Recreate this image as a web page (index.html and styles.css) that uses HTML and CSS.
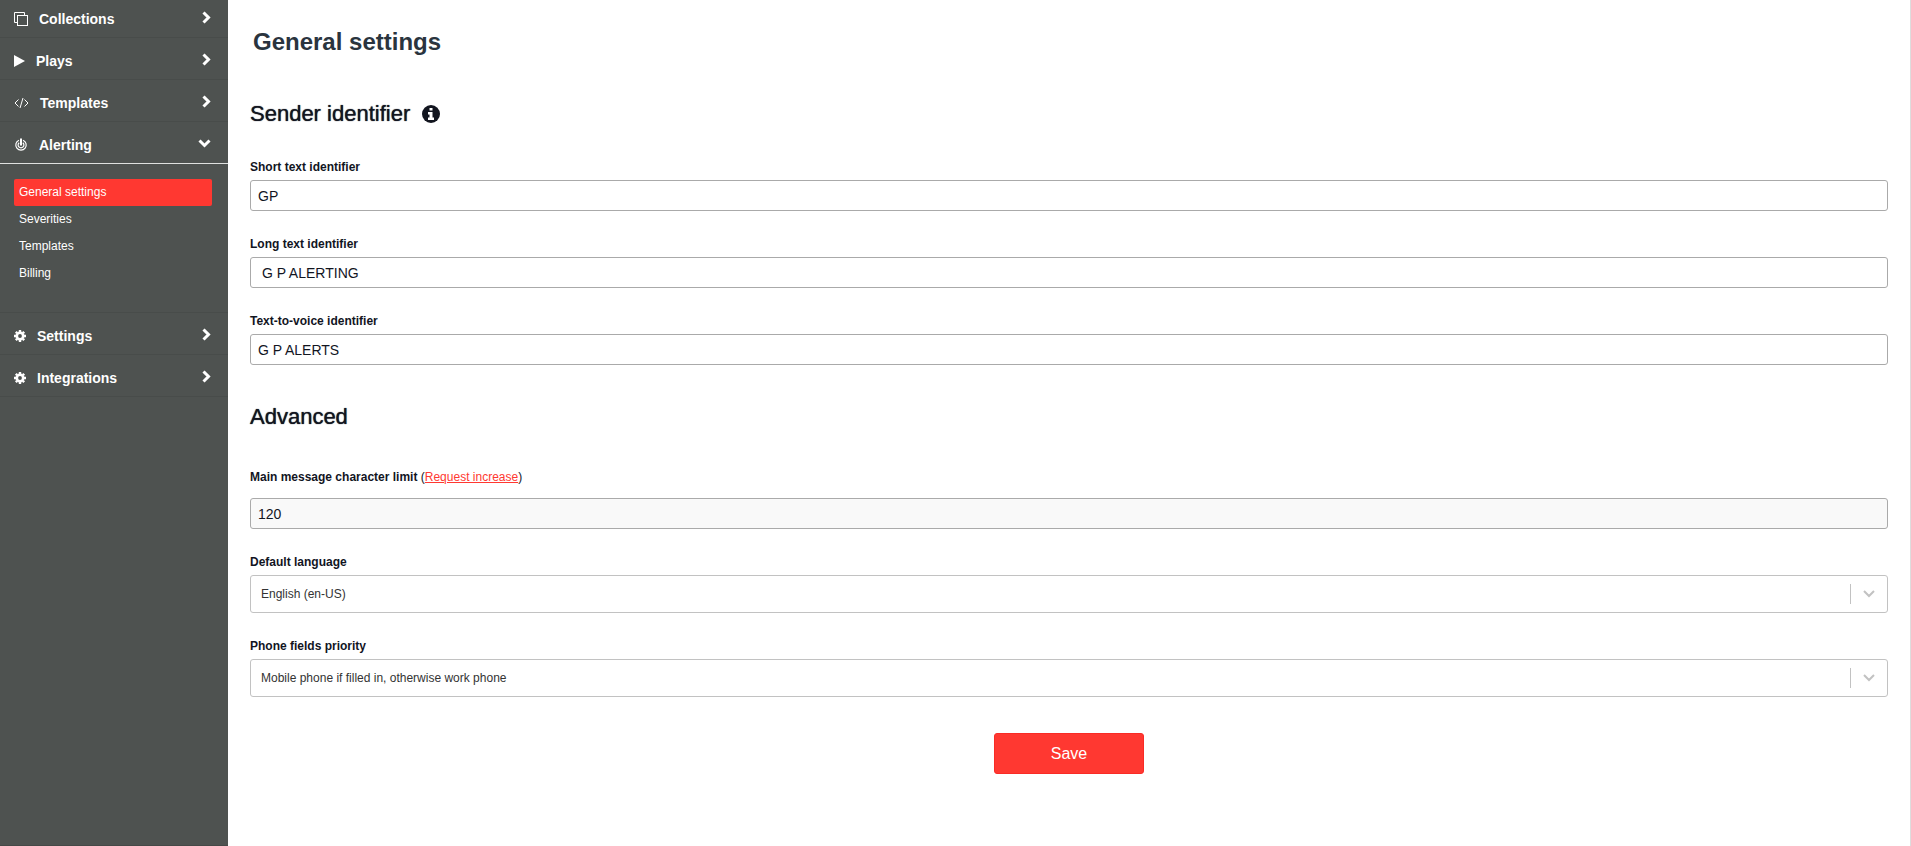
FILE: index.html
```html
<!DOCTYPE html>
<html lang="en">
<head>
    <meta charset="UTF-8">
    <meta name="viewport" content="width=device-width, initial-scale=1.0">
    <title>General settings</title>
    <link rel="stylesheet" href="styles.css">
</head>
<body>

<nav class="sidebar">
    <a class="menu-item" href="#">
        <svg width="14" height="14" viewBox="0 0 14 14" fill="none" stroke="currentColor"><path d="M3 10.500H.5V.5h10V3"/><rect x="3.500" y="3.500" width="10" height="10"/></svg>
        <span>Collections</span>
        <svg class="arrow" width="9" height="13" viewBox="0 0 9 13"><path d="M1.500 1.500l5 5-5 5"/></svg>
    </a>
    <a class="menu-item" href="#">
        <svg width="11" height="12" viewBox="0 0 11 12" fill="currentColor"><path d="M0 0l11 6-11 6z"/></svg>
        <span>Plays</span>
        <svg class="arrow" width="9" height="13" viewBox="0 0 9 13"><path d="M1.500 1.500l5 5-5 5"/></svg>
    </a>
    <a class="menu-item" href="#">
        <svg width="15" height="12" viewBox="0 0 15 12" fill="none" stroke="currentColor"><path d="M4.500 2.500L1 6l3.500 3.500M10.500 2.500L14 6l-3.500 3.500M9 1L6 11"/></svg>
        <span>Templates</span>
        <svg class="arrow" width="9" height="13" viewBox="0 0 9 13"><path d="M1.500 1.500l5 5-5 5"/></svg>
    </a>
    <a class="menu-item open" href="#">
        <svg width="14" height="14" viewBox="0 0 14 14" fill="none" stroke="currentColor"><path d="M5 2.200a5.200 5.200 0 1 0 4 0M5.200 4.700a2.900 2.900 0 1 0 3.600 0" stroke-width="1.200"/><path d="M7 .5v7" stroke-width="2"/></svg>
        <span>Alerting</span>
        <svg class="arrow" width="13" height="9" viewBox="0 0 13 9"><path d="M1.500 1.500l5 5 5-5"/></svg>
    </a>
    <div class="submenu">
        <a class="active" href="#">General settings</a>
        <a href="#">Severities</a>
        <a href="#">Templates</a>
        <a href="#">Billing</a>
    </div>
    <a class="menu-item" href="#">
        <svg width="12" height="12" viewBox="0 0 12 12" fill="none" stroke="currentColor"><circle cx="6" cy="6" r="3.200" stroke-width="2.600"/><path d="M6 0v2M6 10v2M0 6h2M10 6h2M1.800 1.800l1.400 1.400M8.800 8.800l1.400 1.400M1.800 10.200l1.400-1.400M8.800 3.200l1.400-1.400" stroke-width="2.400"/></svg>
        <span>Settings</span>
        <svg class="arrow" width="9" height="13" viewBox="0 0 9 13"><path d="M1.500 1.500l5 5-5 5"/></svg>
    </a>
    <a class="menu-item" href="#">
        <svg width="12" height="12" viewBox="0 0 12 12" fill="none" stroke="currentColor"><circle cx="6" cy="6" r="3.200" stroke-width="2.600"/><path d="M6 0v2M6 10v2M0 6h2M10 6h2M1.800 1.800l1.400 1.400M8.800 8.800l1.400 1.400M1.800 10.200l1.400-1.400M8.800 3.200l1.400-1.400" stroke-width="2.400"/></svg>
        <span>Integrations</span>
        <svg class="arrow" width="9" height="13" viewBox="0 0 9 13"><path d="M1.500 1.500l5 5-5 5"/></svg>
    </a>
</nav>

<main class="content">
    <h1>General settings</h1>
    <form>
        <h2>Sender identifier
            <svg width="18" height="18" viewBox="0 0 18 18"><circle cx="9" cy="9" r="9" fill="currentColor"/><path d="M7.500 3h3v2.600h-3zM6 7h4.500v5.500H12V15H6v-2.500h1.500v-3H6z" fill="#fff"/></svg>
        </h2>
        <div class="field">
            <label for="shortId">Short text identifier</label>
            <input type="text" id="shortId" value="GP">
        </div>
        <div class="field">
            <label for="longId">Long text identifier</label>
            <input type="text" id="longId" value=" G P ALERTING">
        </div>
        <div class="field">
            <label for="voiceId">Text-to-voice identifier</label>
            <input type="text" id="voiceId" value="G P ALERTS">
        </div>

        <h2 class="advanced">Advanced</h2>
        <div class="field">
            <div class="limit-label"><label for="charLimit">Main message character limit</label> (<a href="#">Request increase</a>)</div>
            <input type="text" id="charLimit" value="120" disabled>
        </div>
        <div class="field">
            <label for="language">Default language</label>
            <div class="select-box">
                <select id="language"><option>English (en-US)</option></select>
                <svg width="12" height="8" viewBox="0 0 12 8"><path d="M1 1l5 5 5-5"/></svg>
            </div>
        </div>
        <div class="field">
            <label for="phonePriority">Phone fields priority</label>
            <div class="select-box">
                <select id="phonePriority"><option>Mobile phone if filled in, otherwise work phone</option></select>
                <svg width="12" height="8" viewBox="0 0 12 8"><path d="M1 1l5 5 5-5"/></svg>
            </div>
        </div>
        <button type="submit" class="save">Save</button>
    </form>
</main>

</body>
</html>
```

FILE: styles.css
```css
* {
    box-sizing: border-box;
}

body {
    display: flex;
    min-height: 100vh;
    margin: 0;
    font-family: "Liberation Sans", Arial, sans-serif;
    font-size: 12px;
    color: #12151f;
    background-color: #fff;
}

.sidebar {
    flex: 0 0 228px;
    background-color: #4e5250;
    border-bottom: 1px solid #454947;
}

.menu-item {
    display: flex;
    align-items: center;
    height: 42px;
    padding: 4px 17px 0 14px;
    border-bottom: 1px solid #484c4a;
    color: #fff;
    font-size: 14px;
    font-weight: bold;
    text-decoration: none;
}

.menu-item:first-child {
    height: 38px;
    padding-top: 0;
}

.menu-item span {
    flex: 1;
    margin-left: 11px;
}

.menu-item.open {
    border-bottom-color: #dfe1e0;
}

.arrow {
    margin-bottom: 3px;
    fill: none;
    stroke: currentColor;
    stroke-width: 3;
}

.submenu {
    padding: 15px 16px 25px 14px;
    border-bottom: 1px solid #484c4a;
}

.submenu a {
    display: block;
    padding: 0 5px;
    border-radius: 2px;
    color: #fff;
    line-height: 27px;
    text-decoration: none;
}

.submenu .active {
    background-color: #ff3831;
}

.content {
    flex: 1;
    padding: 28px 22px 40px;
    border-right: 1px solid #ddd;
}

h1 {
    margin: 0 0 46px 3px;
    color: #2a343e;
    font-size: 24px;
    line-height: 28px;
}

h2 {
    display: flex;
    align-items: center;
    gap: 12px;
    margin: 0 0 33px;
    font-size: 22px;
    font-weight: normal;
    line-height: 24px;
    text-shadow: 0 0 1px #12151f;
}

h2.advanced {
    margin-top: 40px;
}

.field {
    margin-bottom: 25px;
}

.field label {
    display: block;
    font-weight: bold;
    line-height: 16px;
}

input {
    display: block;
    width: 100%;
    height: 31px;
    margin-top: 5px;
    padding: 0 7px;
    border: 1px solid #aaa;
    border-radius: 3px;
    background-color: #fff;
    color: #12151f;
    font: 14px "Liberation Sans", Arial, sans-serif;
}

input:disabled {
    background-color: #f9f9f9;
}

.field .limit-label,
.limit-label label {
    line-height: 31px;
}

.limit-label label {
    display: inline;
}

.limit-label a {
    color: #ff3831;
}

.select-box {
    display: flex;
    align-items: center;
    height: 38px;
    margin-top: 5px;
    position: relative;
    border: 1px solid #c2c2c2;
    border-radius: 3px;
}

.select-box select {
    width: 100%;
    height: 36px;
    padding: 0 48px 0 10px;
    border: none;
    background: none;
    appearance: none;
    color: #333;
    font: 12px "Liberation Sans", Arial, sans-serif;
}

.select-box::after {
    content: "";
    position: absolute;
    right: 36px;
    height: 20px;
    border-left: 1px solid #c2c2c2;
}

.select-box svg {
    position: absolute;
    right: 12px;
    fill: none;
    stroke: #c2c2c2;
    stroke-width: 2;
    pointer-events: none;
}

.save {
    display: block;
    width: 150px;
    height: 41px;
    margin: 36px auto 0;
    border: 1px solid #f92b26;
    border-radius: 3px;
    background-color: #ff3831;
    color: #fff;
    font: 16px "Liberation Sans", Arial, sans-serif;
    cursor: pointer;
}
```
